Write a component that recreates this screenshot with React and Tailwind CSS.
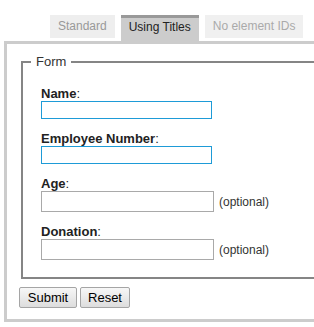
import React from 'react';

const tabs = [
  { label: 'Standard', active: false, text: 'text-[#999]', bg: 'bg-[#eeeeee]' },
  { label: 'Using Titles', active: true },
  { label: 'No element IDs', active: false, text: 'text-[#aaa]', bg: 'bg-[#f0f0f0]' },
];

const Field = ({ label, wide, optional }) => (
  <div className="mb-[12px] last:mb-0">
    <label className="block leading-[15px] text-[13px] text-[#222]">
      <b>{label}</b>:
    </label>
    <div className="flex items-center">
      {wide ? (
        <input
          type="text"
          className="w-[173px] h-[21px] border border-[#a9a9a9] bg-white px-1 outline-none"
        />
      ) : (
        <input
          type="text"
          className="w-[171px] h-[18px] border border-[#1e9bd7] bg-white px-1 outline-none"
        />
      )}
      {optional && <span className="ml-[5px] text-[12px] text-[#333]">(optional)</span>}
    </div>
  </div>
);

const App = () => {
  return (
    <div className="w-full overflow-hidden bg-white pt-[15px] pb-[6px] font-['Liberation_Sans',Arial,sans-serif] text-[13px] text-[#222]">
      {/* Tabs */}
      <div className="flex items-start gap-[6px] pl-[50px]">
        {tabs.map((t) =>
          t.active ? (
            <div
              key={t.label}
              className="h-[26px] border-t-[3px] border-[#999] bg-[#cccccc] px-[8px] pt-0 text-[12px] leading-[18px] text-[#222]"
            >
              {t.label}
            </div>
          ) : (
            <div
              key={t.label}
              className={`h-[23px] px-[8px] text-[12px] leading-[23px] ${t.bg} ${t.text}`}
            >
              {t.label}
            </div>
          )
        )}
      </div>

      {/* Panel */}
      <div className="ml-[4px] w-[340px] border-[3px] border-[#cccccc] pb-[11px]">
        <fieldset className="ml-[14px] mt-[10px] border-2 border-[#858585] pl-[8px] pb-[17px]">
          <legend className="px-[5px] text-[13px] leading-[15px] text-[#333]">Form</legend>
          <div className="pl-[10px] pt-[17px]">
            <Field label="Name" />
            <Field label="Employee Number" />
            <Field label="Age" wide optional />
            <Field label="Donation" wide optional />
          </div>
        </fieldset>

        <div className="ml-[12px] mt-[8px] flex gap-[3px]">
          <button
            type="button"
            className="h-[21px] w-[58px] rounded-[2px] border border-[#a5a5a5] bg-gradient-to-b from-[#f7f7f7] to-[#dddddd] text-[13px] text-black"
          >
            Submit
          </button>
          <button
            type="button"
            className="h-[21px] w-[50px] rounded-[2px] border border-[#a5a5a5] bg-gradient-to-b from-[#f7f7f7] to-[#dddddd] text-[13px] text-black"
          >
            Reset
          </button>
        </div>
      </div>
    </div>
  );
};

export default App;
